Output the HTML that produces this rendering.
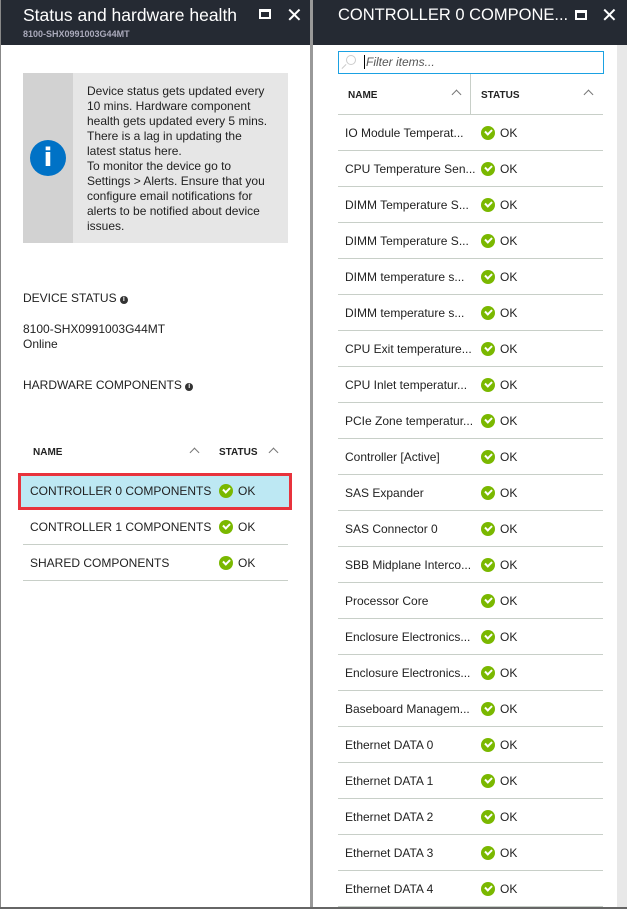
<!DOCTYPE html>
<html><head><meta charset="utf-8"><style>
*{margin:0;padding:0;box-sizing:border-box}
body{width:627px;height:909px;overflow:hidden;background:#fff;font-family:"Liberation Sans",Arial,sans-serif;color:#222;position:relative}
.abs{position:absolute}
.hdr{background:#252a33;color:#fff;height:45px;top:0}
.t{font-size:12px;white-space:nowrap}
.chk{position:absolute;width:14px;height:14px;border-radius:50%;background:#7ab800}
.chk:after{content:"";position:absolute;left:4px;top:3px;width:5px;height:3px;border-left:2px solid #fff;border-bottom:2px solid #fff;transform:rotate(-45deg)}
.line{position:absolute;height:1px;background:#c8cfc8}
.caret{position:absolute;width:7px;height:7px;border-left:1px solid #777;border-top:1px solid #777;transform:rotate(45deg)}
.maxi{position:absolute;width:12px;height:10px;border:2px solid #fff;border-top-width:3px}
.x{position:absolute;color:#fff;font-size:20px;line-height:20px}
.b{font-weight:bold;font-size:10px}
.ii{display:inline-block;width:8px;height:8px;border-radius:50%;background:#333;color:#fff;font-size:7px;line-height:8px;text-align:center;font-weight:bold;vertical-align:1px}
</style></head><body>
<!-- left panel -->
<div class="abs" style="left:0;top:0;width:1px;height:909px;background:#888"></div>
<div class="abs hdr" style="left:1px;width:310px">
 <div class="abs" style="left:22px;top:5px;font-size:17.5px">Status and hardware health</div>
 <div class="abs" style="left:22px;top:29px;font-size:9px;color:#aab;font-weight:bold">8100-SHX0991003G44MT</div>
 <div class="maxi" style="left:258px;top:9px"></div>
 <div class="x" style="left:285px;top:6px">✕</div>
</div>
<div class="abs" style="left:310px;top:0;width:3px;height:909px;background:#999"></div>
<div class="abs" style="left:23px;top:73px;width:50px;height:170px;background:#d2d2d2"></div>
<div class="abs" style="left:73px;top:73px;width:215px;height:170px;background:#e6e6e6"></div>
<div class="abs" style="left:30px;top:140px;width:36px;height:36px;border-radius:50%;background:#0072c6;color:#fff;text-align:center;font-weight:bold;font-size:26px;line-height:36px;font-family:'DejaVu Sans',sans-serif">i</div>
<div class="abs" style="left:87px;top:84px;width:185px;font-size:12px;line-height:15px">Device status gets updated every 10 mins. Hardware component health gets updated every 5 mins. There is a lag in updating the latest status here.<br>To monitor the device go to Settings &gt; Alerts. Ensure that you configure email notifications for alerts to be notified about device issues.</div>
<div class="abs t" style="left:23px;top:291px">DEVICE STATUS <span class="ii">i</span></div>
<div class="abs t" style="left:23px;top:322px">8100-SHX0991003G44MT</div>
<div class="abs t" style="left:23px;top:337px">Online</div>
<div class="abs t" style="left:23px;top:378px">HARDWARE COMPONENTS <span class="ii">i</span></div>
<div class="abs b" style="left:33px;top:447px">NAME</div>
<div class="caret" style="left:191px;top:449px"></div>
<div class="abs b" style="left:219px;top:447px">STATUS</div>
<div class="caret" style="left:270px;top:449px"></div>
<div class="abs" style="left:18px;top:473px;width:274px;height:37px;border:3px solid #e8333c"></div>
<div class="abs" style="left:21px;top:476px;width:268px;height:31px;background:#bde8f3"></div>
<div class="abs t" style="left:30px;top:484px">CONTROLLER 0 COMPONENTS</div>
<div class="chk" style="left:219px;top:484px"></div><div class="abs t" style="left:238px;top:484px">OK</div>
<div class="abs t" style="left:30px;top:520px">CONTROLLER 1 COMPONENTS</div>
<div class="chk" style="left:219px;top:520px"></div><div class="abs t" style="left:238px;top:520px">OK</div>
<div class="line" style="left:23px;top:544px;width:265px"></div>
<div class="abs t" style="left:30px;top:556px">SHARED COMPONENTS</div>
<div class="chk" style="left:219px;top:556px"></div><div class="abs t" style="left:238px;top:556px">OK</div>
<div class="line" style="left:23px;top:580px;width:265px"></div>
<!-- right panel -->
<div class="abs hdr" style="left:313px;width:314px">
 <div class="abs" style="left:25px;top:6px;font-size:16.5px">CONTROLLER 0 COMPONE...</div>
 <div class="maxi" style="left:262px;top:10px"></div>
 <div class="x" style="left:288px;top:6px">✕</div>
</div>
<div class="abs" style="left:617px;top:45px;width:10px;height:864px;background:#e8e8e8"></div>
<div class="abs" style="left:0;top:907px;width:627px;height:2px;background:#666"></div>
<div class="abs" style="left:338px;top:51px;width:266px;height:23px;border:1px solid #1ba1e2"></div>
<div class="abs" style="left:346px;top:55px;width:10px;height:10px;border:1px solid #ccc;border-radius:50%"></div>
<div class="abs" style="left:341px;top:66px;width:6px;height:1px;background:#ccc;transform:rotate(-45deg)"></div>
<div class="abs" style="left:364px;top:55px;width:1px;height:14px;background:#000"></div>
<div class="abs t" style="left:366px;top:55px;font-style:italic;color:#555">Filter items...</div>
<div class="abs" style="left:470px;top:74px;width:1px;height:40px;background:#c8cfc8"></div>
<div class="abs b" style="left:348px;top:90px">NAME</div>
<div class="caret" style="left:453px;top:91px"></div>
<div class="abs b" style="left:481px;top:90px">STATUS</div>
<div class="caret" style="left:585px;top:91px"></div>
<div class="line" style="left:338px;top:114px;width:265px"></div>
<div id="rows"></div>
<script>
var n=["IO Module Temperat...","CPU Temperature Sen...","DIMM Temperature S...","DIMM Temperature S...","DIMM temperature s...","DIMM temperature s...","CPU Exit temperature...","CPU Inlet temperatur...","PCIe Zone temperatur...","Controller [Active]","SAS Expander","SAS Connector 0","SBB Midplane Interco...","Processor Core","Enclosure Electronics...","Enclosure Electronics...","Baseboard Managem...","Ethernet DATA 0","Ethernet DATA 1","Ethernet DATA 2","Ethernet DATA 3","Ethernet DATA 4"];
var h="";for(var i=0;i<n.length;i++){var y=114+36*i;
h+='<div class="abs t" style="left:345px;top:'+(y+12)+'px">'+n[i]+'</div><div class="chk" style="left:481px;top:'+(y+12)+'px"></div><div class="abs t" style="left:500px;top:'+(y+12)+'px">OK</div><div class="line" style="left:338px;top:'+(y+36)+'px;width:265px"></div>';}
document.getElementById("rows").innerHTML=h;
</script>
</body></html>
